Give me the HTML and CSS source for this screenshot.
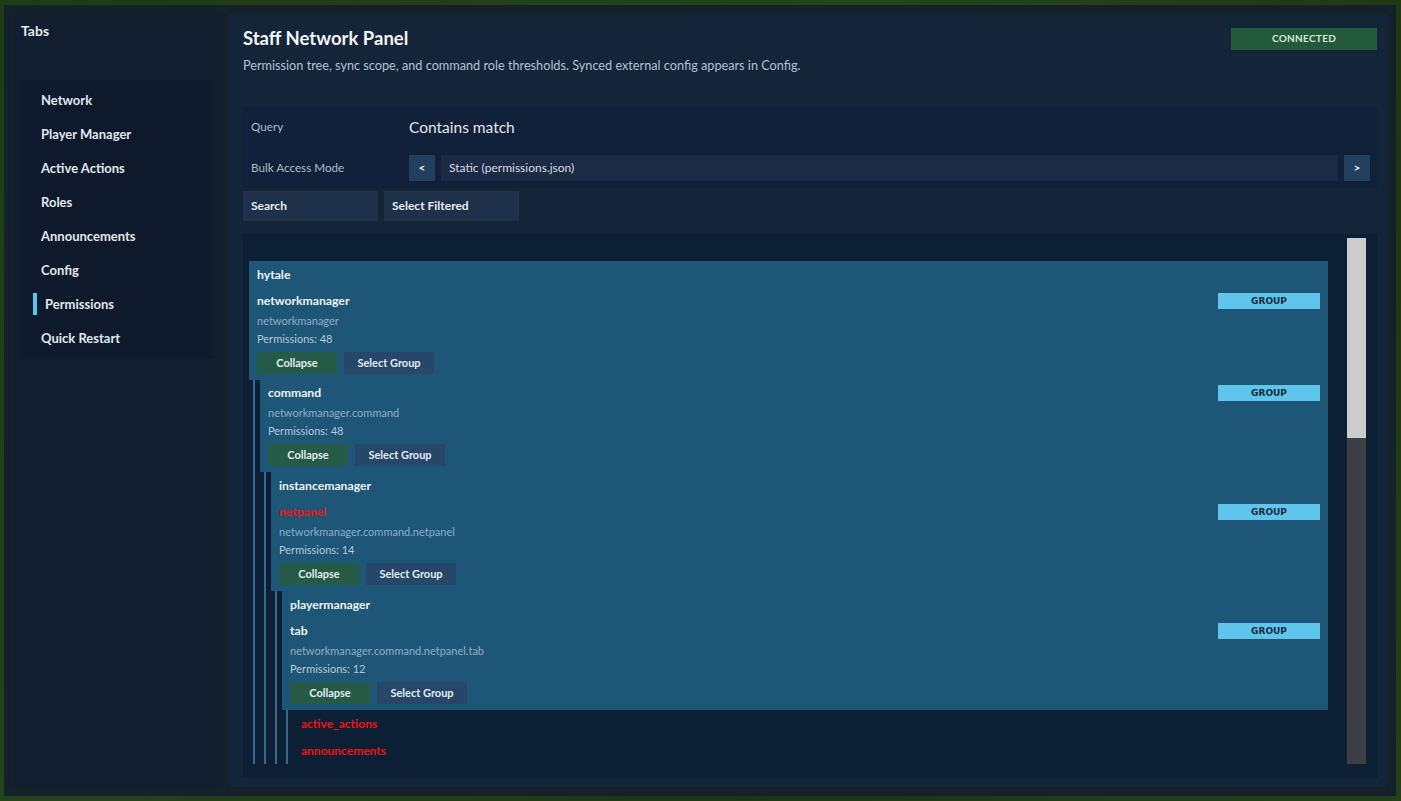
FILE: index.html
```html
<!DOCTYPE html>
<html>
<head>
    <title>Staff Network Panel</title>
    <link rel="stylesheet" href="styles.css">
</head>
<body>
    <div class="frame">
        <aside class="sidebar">
            <h2 class="side-title">Tabs</h2>
            <ul class="tabs">
                <li>Network</li>
                <li>Player Manager</li>
                <li>Active Actions</li>
                <li>Roles</li>
                <li>Announcements</li>
                <li>Config</li>
                <li class="active">Permissions</li>
                <li>Quick Restart</li>
            </ul>
        </aside>

        <main class="panel">
            <div class="panel-head">
                <div>
                    <h1>Staff Network Panel</h1>
                    <p class="sub">Permission tree, sync scope, and command role thresholds. Synced external config appears in Config.</p>
                </div>
                <span class="status">CONNECTED</span>
            </div>

            <div class="filters">
                <div class="row query-row">
                    <span class="label">Query</span>
                    <span class="query">Contains match</span>
                </div>
                <div class="row">
                    <span class="label">Bulk Access Mode</span>
                    <button class="arrow">&lt;</button>
                    <div class="field">Static (permissions.json)</div>
                    <button class="arrow">&gt;</button>
                </div>
            </div>

            <div class="actions">
                <button>Search</button>
                <button>Select Filtered</button>
            </div>

            <div class="tree-box">
                <div class="tree">
                    <div class="card">
                        <div class="group-label">hytale</div>
                        <div class="entry">
                            <div class="entry-head"><span>networkmanager</span><span class="badge">GROUP</span></div>
                            <div class="path">networkmanager</div>
                            <div class="count">Permissions: 48</div>
                            <div class="btns"><button class="collapse">Collapse</button><button class="select">Select Group</button></div>
                        </div>
                    </div>
                    <div class="children">
                        <div class="card">
                            <div class="entry">
                                <div class="entry-head"><span>command</span><span class="badge">GROUP</span></div>
                                <div class="path">networkmanager.command</div>
                                <div class="count">Permissions: 48</div>
                                <div class="btns"><button class="collapse">Collapse</button><button class="select">Select Group</button></div>
                            </div>
                        </div>
                        <div class="children">
                            <div class="card">
                                <div class="group-label">instancemanager</div>
                                <div class="entry">
                                    <div class="entry-head"><span class="red">netpanel</span><span class="badge">GROUP</span></div>
                                    <div class="path">networkmanager.command.netpanel</div>
                                    <div class="count">Permissions: 14</div>
                                    <div class="btns"><button class="collapse">Collapse</button><button class="select">Select Group</button></div>
                                </div>
                            </div>
                            <div class="children">
                                <div class="card">
                                    <div class="group-label">playermanager</div>
                                    <div class="entry">
                                        <div class="entry-head"><span>tab</span><span class="badge">GROUP</span></div>
                                        <div class="path">networkmanager.command.netpanel.tab</div>
                                        <div class="count">Permissions: 12</div>
                                        <div class="btns"><button class="collapse">Collapse</button><button class="select">Select Group</button></div>
                                    </div>
                                </div>
                                <div class="children">
                                    <div class="leaf red">active_actions</div>
                                    <div class="leaf red">announcements</div>
                                </div>
                            </div>
                        </div>
                    </div>
                </div>
                <div class="scrollbar"><div class="thumb"></div></div>
            </div>
        </main>
    </div>
</body>
</html>
```

FILE: styles.css
```css
body {
    margin: 0;
    height: 801px;
    overflow: hidden;
    font-family: Lato, "Open Sans", sans-serif;
    background-color: #203b16;
    background-image: linear-gradient(135deg, #1f3a15 0%, #254419 40%, #1d3614 70%, #23401a 100%);
    color: #e3eaf1;
}

.frame {
    display: flex;
    gap: 9px;
    margin: 5px 5px 5px 4px;
    width: 1392px;
    height: 791px;
    padding: 9px;
    box-sizing: border-box;
    background-color: #13222a;
}

/* sidebar */
.sidebar {
    width: 207px;
    flex-shrink: 0;
    background-color: #111e2f;
    padding: 0 7px 0 8px;
    box-sizing: border-box;
}

.side-title {
    margin: 0;
    height: 34px;
    line-height: 34px;
    font-size: 14px;
    font-weight: 700;
    color: #e3eaf1;
}

.tabs {
    list-style: none;
    margin: 32px 0 0;
    padding: 3px 0 4px;
    background-color: #0e1a2b;
}

.tabs li {
    height: 34px;
    line-height: 34px;
    padding-left: 20px;
    font-size: 13px;
    font-weight: 700;
    color: #e0e7ee;
    position: relative;
}

.tabs li.active {
    padding-left: 24px;
}

.tabs li.active::before {
    content: "";
    position: absolute;
    left: 12px;
    top: 6px;
    width: 4px;
    height: 22px;
    background-color: #4fc8f2;
}

/* main panel */
.panel {
    flex: 1;
    min-height: 0;
    background-color: #14253a;
    padding: 13px 9px 9px 14px;
    box-sizing: border-box;
    display: flex;
    flex-direction: column;
}

.panel-head {
    display: flex;
    justify-content: space-between;
    align-items: flex-start;
}

.panel-head h1 {
    margin: 0;
    font-size: 18.5px;
    line-height: 22px;
    font-weight: 700;
    color: #f1f5f9;
}

.sub {
    margin: 7px 0 0;
    font-size: 12.7px;
    line-height: 18px;
    color: #b3c2d1;
}

.status {
    margin-top: 1px;
    margin-right: 1px;
    width: 146px;
    height: 22px;
    line-height: 21px;
    text-align: center;
    background-color: #245a3c;
    color: #d3ead8;
    font-size: 10px;
    font-weight: 700;
    letter-spacing: 0.3px;
}

.filters {
    margin-top: 32px;
    background-color: #12213a;
    padding: 7px 8px;
}

.row {
    display: flex;
    align-items: center;
    gap: 6px;
    height: 26px;
}

.query-row {
    height: 28px;
    margin-bottom: 14px;
}

.label {
    width: 152px;
    font-size: 11.7px;
    color: #aebccb;
    padding-bottom: 2px;
}

.query {
    font-size: 15.5px;
    color: #e1e7ee;
    padding-bottom: 1px;
}

.arrow {
    width: 26px;
    height: 26px;
    border: none;
    padding: 0 0 1px;
    background-color: #22405e;
    color: #e3eaf1;
    font-family: inherit;
    font-size: 12px;
    font-weight: 700;
}

.field {
    flex: 1;
    height: 26px;
    line-height: 25px;
    padding-left: 8px;
    background-color: #1b2b43;
    font-size: 12px;
    color: #d5dde6;
}

.actions {
    display: flex;
    gap: 6px;
    margin-top: 3px;
}

.actions button {
    width: 135px;
    height: 30px;
    border: none;
    padding: 0 0 2px 8px;
    text-align: left;
    background-color: #1f3149;
    color: #e6ecf2;
    font-family: inherit;
    font-size: 12px;
    font-weight: 700;
}

/* tree */
.tree-box {
    margin-top: 13px;
    height: 544px;
    flex: none;
    display: flex;
    background-color: #0d1f35;
    padding: 4px 12px 14px 6px;
    box-sizing: border-box;
}

.tree {
    flex: 1;
    min-width: 0;
    overflow: hidden;
    padding-top: 23px;
}

.scrollbar {
    width: 19px;
    margin-left: 19px;
    background-color: #3c3f44;
}

.thumb {
    height: 200px;
    background-color: #cccccc;
}

.card {
    background-color: #1e5677;
    padding: 0 8px;
}

.group-label {
    height: 27px;
    line-height: 27px;
    font-size: 12.2px;
    font-weight: 700;
    color: #eef3f7;
}

.entry {
    padding: 5px 0 6px;
}

.entry-head {
    display: flex;
    justify-content: space-between;
    height: 16px;
    line-height: 16px;
    font-size: 12.2px;
    font-weight: 700;
    color: #eef3f7;
}

.badge {
    width: 102px;
    height: 16px;
    line-height: 16px;
    text-align: center;
    background-color: #5fc5eb;
    color: #13283a;
    font-family: "DejaVu Sans", sans-serif;
    font-size: 9px;
    font-weight: 700;
}

.path {
    margin-top: 5px;
    font-size: 11px;
    line-height: 14px;
    color: #8eaec6;
}

.count {
    margin-top: 4px;
    font-size: 11px;
    line-height: 14px;
    color: #b6c9d8;
}

.btns {
    display: flex;
    gap: 7px;
    margin-top: 6px;
}

.btns button {
    height: 22px;
    border: none;
    padding: 0 0 2px;
    font-family: inherit;
    font-size: 11px;
    font-weight: 700;
    color: #e3ebf0;
}

.collapse {
    width: 80px;
    background-color: #245a46;
}

.select {
    width: 90px;
    background-color: #26466a;
}

.children {
    margin-left: 4px;
    border-left: 2px solid #3a6890;
    padding-left: 5px;
}

.leaf {
    height: 27px;
    line-height: 27px;
    padding-left: 8px;
    font-size: 12px;
    font-weight: 700;
}

.red {
    color: #ee1414;
    font-weight: 700;
}
```
